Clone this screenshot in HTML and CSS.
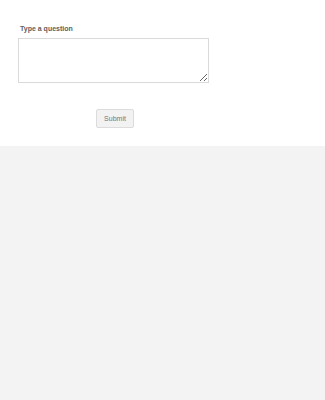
FILE: index.html
```html
<!DOCTYPE html>
<html>
<head>
<meta charset="utf-8">
<link rel="stylesheet" href="styles.css">
</head>
<body>
<form class="form">
  <label class="label" for="q">Type a question</label>
  <textarea class="question" id="q"></textarea>
  <div class="actions">
    <button type="button" class="submit">Submit</button>
  </div>
</form>
<div class="rest"></div>
</body>
</html>
```
FILE: styles.css
```css
html, body {
  margin: 0;
  padding: 0;
  height: 100%;
  background: #f3f3f3;
  font-family: "Liberation Sans", Arial, sans-serif;
}
.form {
  background: #ffffff;
  margin: 0;
  padding: 24px 0 18px 18px;
  height: 146px;
  box-sizing: border-box;
  display: flex;
  flex-direction: column;
}
.label {
  display: block;
  font-size: 7px;
  line-height: 9px;
  font-weight: bold;
  color: #5e5e5e;
  padding-left: 2px;
  margin-bottom: 5px;
}
.question {
  display: block;
  width: 191px;
  height: 47px;
  box-sizing: border-box;
  border: 1px solid #dadada;
  border-radius: 0;
  margin: 0;
  padding: 2px;
  background: #ffffff;
  font-family: inherit;
  font-size: 7px;
}
.actions {
  margin-top: 24px;
  padding-left: 78px;
}
.submit {
  width: 38px;
  height: 19px;
  box-sizing: border-box;
  border: 1px solid #dcdcdc;
  border-radius: 2px;
  background: #f2f2f2;
  color: #777777;
  font-family: inherit;
  font-size: 7px;
  padding: 0;
  margin: 0;
}
```
